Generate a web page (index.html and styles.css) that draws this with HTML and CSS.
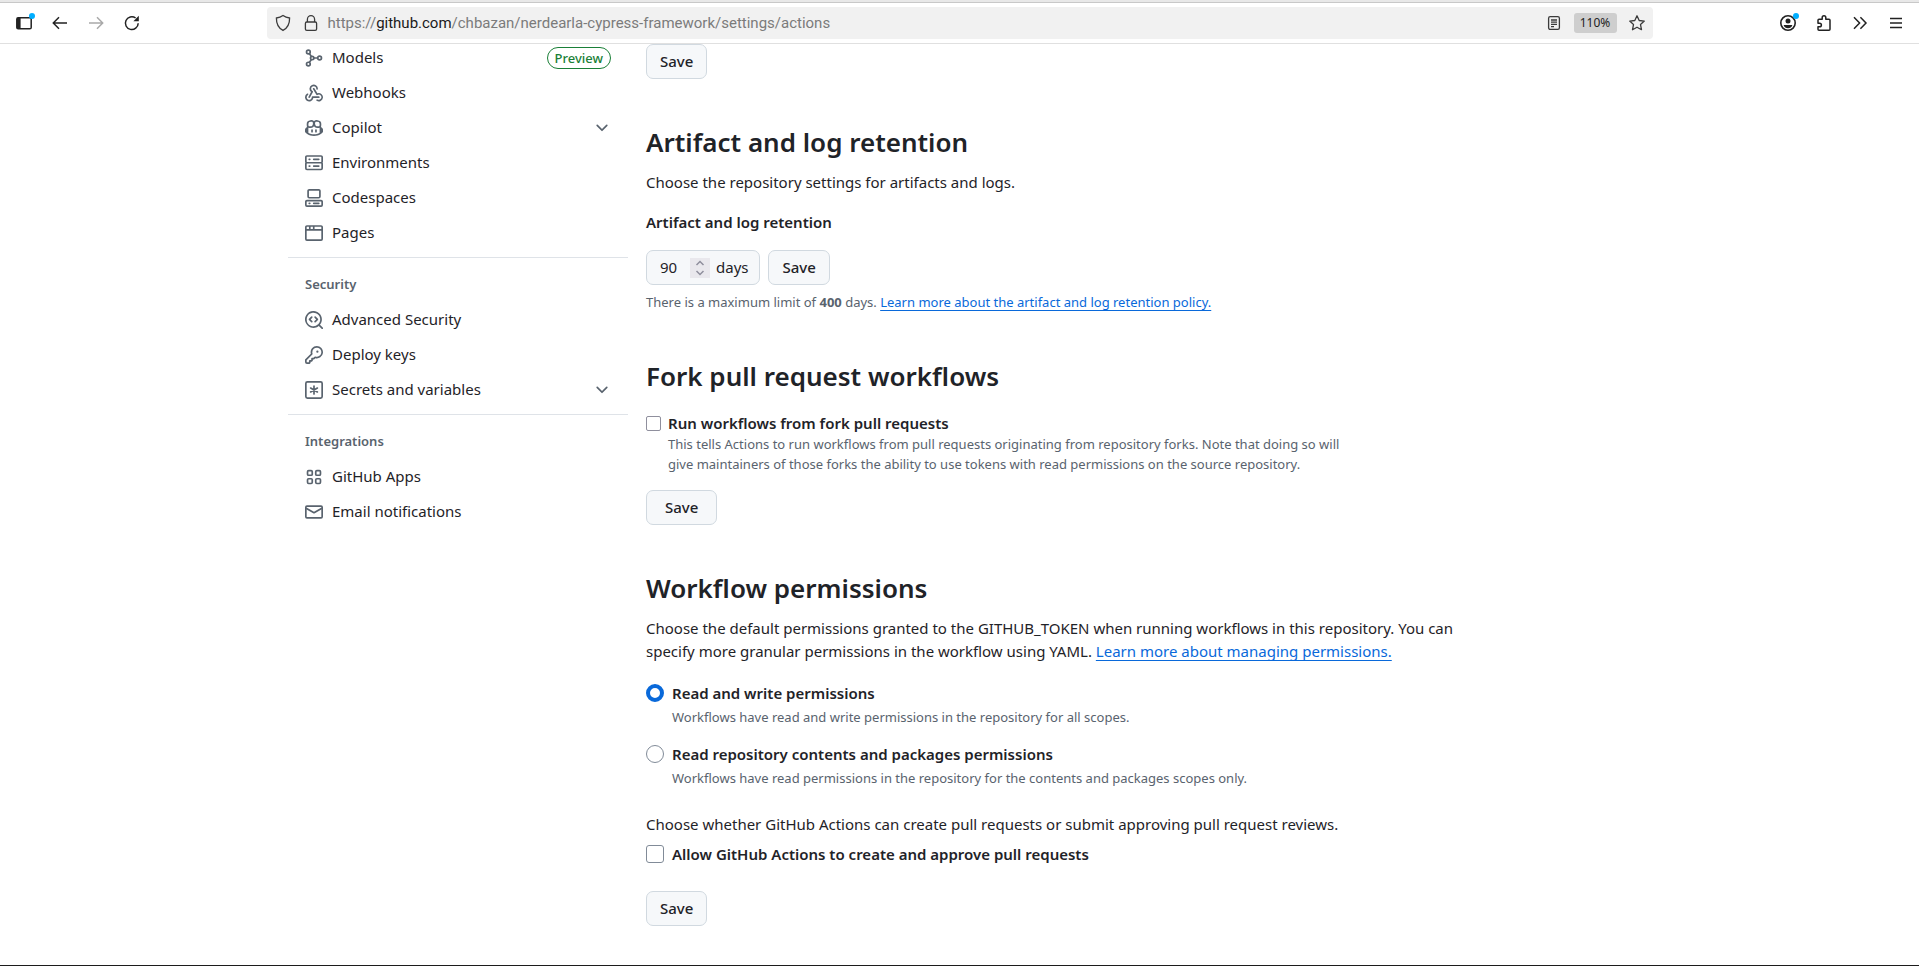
FILE: index.html
```html
<!DOCTYPE html>
<html lang="en">
<head>
<meta charset="utf-8">
<meta name="viewport" content="width=device-width, initial-scale=1">
<title>Actions settings</title>
<link rel="stylesheet" href="styles.css">
</head>
<body>
<header class="toolbar">
  <div class="tools">
    <button class="tool" type="button" aria-label="Show sidebar">
      <svg class="glyph" viewBox="0 0 18 18"><rect x="1.8" y="3.8" width="14.4" height="11" rx="1.4" fill="none" stroke="currentColor" stroke-width="1.5"/><path d="M2 3.8h3.6v11H2z" fill="currentColor"/></svg>
      <span class="dot"></span>
    </button>
    <button class="tool" type="button" aria-label="Back">
      <svg class="glyph line" viewBox="0 0 18 18"><path d="M16 9H2.5M8 3.3 2.3 9 8 14.7"/></svg>
    </button>
    <button class="tool" type="button" aria-label="Forward" disabled>
      <svg class="glyph line" viewBox="0 0 18 18"><path d="M2 9h13.5M10 3.3 15.7 9 10 14.7"/></svg>
    </button>
    <button class="tool" type="button" aria-label="Reload">
      <svg class="glyph line" viewBox="0 0 18 18"><path d="M15.2 9.3A6.4 6.4 0 1 1 12.6 4"/><path d="M15.8 1.8v5.4h-5.4z" fill="currentColor" stroke="none"/></svg>
    </button>
  </div>
  <div class="urlbar">
    <button class="slot" type="button" aria-label="Tracking protection">
      <svg class="glyph thin" viewBox="0 0 18 18"><path d="M9 1.6c2 1.5 4.200 2.200 6.600 2.400.1 5-1.200 9.600-6.600 12.400C3.600 13.600 2.300 9 2.400 4 4.800 3.800 7 3.100 9 1.600Z"/></svg>
    </button>
    <button class="slot" type="button" aria-label="Connection secure">
      <svg class="glyph thin" viewBox="0 0 18 18"><rect x="3.400" y="8" width="11.200" height="8.400" rx="1.400"/><path d="M5.400 8V5.200a3.600 3.600 0 0 1 7.200 0V8"/></svg>
    </button>
    <div class="address" role="textbox" aria-label="Address">https://<span class="host">github.com</span>/chbazan/nerdearla-cypress-framework/settings/actions</div>
    <button class="slot" type="button" aria-label="Reader view">
      <svg class="glyph thin" viewBox="0 0 18 18"><rect x="3.600" y="2.600" width="10.800" height="12.800" rx="1.600"/><path d="M6 6h6M6 8.200h6M6 10.400h6M6 12.600h3"/></svg>
    </button>
    <button class="zoom-level" type="button">110%</button>
    <button class="slot" type="button" aria-label="Bookmark">
      <svg class="glyph thin" viewBox="0 0 18 18"><path d="m9 1.800 2.200 4.700 5.100.6-3.800 3.500 1 5.100L9 13.200l-4.500 2.500 1-5.100L1.700 7.100l5.100-.6Z" stroke-linejoin="round"/></svg>
    </button>
  </div>
  <div class="tools end">
    <button class="tool" type="button" aria-label="Account">
      <svg class="glyph" viewBox="0 0 18 18"><circle cx="9" cy="9" r="7.200" fill="none" stroke="currentColor" stroke-width="1.600"/><circle cx="9" cy="7" r="2.500" fill="currentColor"/><path d="M4.600 11h8.800c-.6 2.200-2.300 3.200-4.400 3.200S5.200 13.200 4.600 11Z" fill="currentColor"/></svg>
      <span class="dot"></span>
    </button>
    <button class="tool" type="button" aria-label="Extensions">
      <svg class="glyph line" viewBox="0 0 18 18"><path d="M3 7.400V6.200c0-.6.400-1 1-1h3.200V3.600a1.800 1.800 0 0 1 3.600 0v1.600H14c.6 0 1 .4 1 1v9c0 .6-.4 1-1 1H4c-.6 0-1-.4-1-1v-2.400h1.600a1.800 1.800 0 0 0 0-3.600H3Z" stroke-linejoin="round"/></svg>
    </button>
    <button class="tool" type="button" aria-label="More tools">
      <svg class="glyph line" viewBox="0 0 18 18"><path d="M3 3.200 8.600 9 3 14.800M9.400 3.200 15 9l-5.600 5.800"/></svg>
    </button>
    <button class="tool" type="button" aria-label="Menu">
      <svg class="glyph line" viewBox="0 0 18 18"><path d="M3 4.500h12M3 9h12M3 13.500h12"/></svg>
    </button>
  </div>
</header>

<div class="viewport">
  <div class="page">
    <nav class="sidebar" aria-label="Repository settings">
      <ul class="nav-list">
        <li><a class="nav-item" href="#models">
          <svg class="icon stroked" viewBox="0 0 16 16"><circle cx="3" cy="2.600" r="1.650"/><circle cx="3" cy="13.400" r="1.650"/><circle cx="6.400" cy="8" r="1.500"/><circle cx="13" cy="8" r="1.650"/><path d="M3.800 4.100 5.700 6.700M3.800 11.900l1.900-2.600M7.900 8h3.400"/></svg>
          <span class="nav-label">Models</span><span class="pill">Preview</span></a></li>
        <li><a class="nav-item" href="#webhooks">
          <svg class="icon" viewBox="0 0 16 16"><path d="M5.500 4.250a2.250 2.250 0 0 1 4.500 0 .75.75 0 0 0 1.500 0 3.750 3.750 0 1 0-6.140 2.889l-2.272 4.258a.75.75 0 0 0 1.324.706L7 7.250a.75.75 0 0 0-.309-1.015A2.250 2.250 0 0 1 5.500 4.250Z"/><path d="M7.364 3.607a.75.75 0 0 1 1.030.257l2.608 4.349a3.750 3.750 0 1 1-.628 6.785.75.75 0 0 1 .752-1.299 2.250 2.250 0 1 0-.033-3.880.75.75 0 0 1-1.030-.256L7.107 4.636a.75.75 0 0 1 .257-1.030Z"/><path d="M2.900 8.776A.75.75 0 0 1 2.625 9.800 2.250 2.250 0 1 0 6 11.750a.75.75 0 0 1 .75-.751h5.500a.75.75 0 0 1 0 1.500H7.425a3.751 3.751 0 1 1-5.550-3.998.75.75 0 0 1 1.024.274Z"/></svg>
          <span class="nav-label">Webhooks</span></a></li>
        <li><button class="nav-item" type="button" aria-expanded="false">
          <svg class="icon" viewBox="0 0 16 16"><path d="M7.998 15.035c-4.562 0-7.873-2.914-7.998-3.749V9.338c.085-.628.677-1.686 1.588-2.065.013-.07.024-.143.036-.218.029-.183.06-.384.126-.612-.201-.508-.254-1.084-.254-1.656 0-.87.128-1.769.693-2.484.579-.733 1.494-1.124 2.724-1.261 1.206-.134 2.262.034 2.944.765.05.053.096.108.139.165.044-.057.094-.112.143-.165.682-.731 1.738-.899 2.944-.765 1.230.137 2.145.528 2.724 1.261.566.715.693 1.614.693 2.484 0 .572-.053 1.148-.254 1.656.066.228.098.429.126.612.012.076.024.148.037.218.924.385 1.522 1.471 1.591 2.095v1.872c0 .766-3.351 3.795-8.002 3.795Zm0-1.485c2.280 0 4.584-1.110 5.002-1.433V7.862l-.023-.116c-.49.21-1.075.291-1.727.291-1.146 0-2.059-.327-2.710-.991A3.222 3.222 0 0 1 8 6.303a3.240 3.240 0 0 1-.544.743c-.65.664-1.563.991-2.710.991-.652 0-1.236-.081-1.727-.291l-.023.116v4.255c.419.323 2.722 1.433 5.002 1.433ZM6.762 2.830c-.193-.206-.637-.413-1.682-.297-1.019.113-1.479.404-1.713.7-.247.312-.369.789-.369 1.554 0 .793.129 1.171.308 1.371.162.181.519.379 1.442.379.853 0 1.339-.235 1.638-.54.315-.322.527-.827.617-1.553.117-.935-.037-1.395-.241-1.614Zm4.155-.297c-1.044-.116-1.488.091-1.681.297-.204.219-.359.679-.242 1.614.091.726.303 1.231.618 1.553.299.305.784.54 1.638.54.922 0 1.280-.198 1.442-.379.179-.2.308-.578.308-1.371 0-.765-.123-1.242-.37-1.554-.233-.296-.693-.587-1.713-.7Z"/><path d="M6.250 9.037a.75.75 0 0 1 .75.75v1.501a.75.75 0 0 1-1.500 0V9.787a.75.75 0 0 1 .75-.75Zm4.250.75v1.501a.75.75 0 0 1-1.500 0V9.787a.75.75 0 0 1 1.500 0Z"/></svg>
          <span class="nav-label">Copilot</span>
          <svg class="icon" viewBox="0 0 16 16"><path d="M12.780 5.220a.749.749 0 0 1 0 1.060l-4.250 4.250a.749.749 0 0 1-1.060 0L3.220 6.280a.749.749 0 1 1 1.060-1.060L8 8.939l3.720-3.719a.749.749 0 0 1 1.060 0Z"/></svg></button></li>
        <li><a class="nav-item" href="#environments">
          <svg class="icon" viewBox="0 0 16 16"><path d="M1.750 1h12.500c.966 0 1.750.784 1.750 1.750v4c0 .372-.116.717-.314 1 .198.283.314.628.314 1v4a1.750 1.750 0 0 1-1.750 1.750H1.750A1.750 1.750 0 0 1 0 12.750v-4c0-.358.109-.707.314-1a1.739 1.739 0 0 1-.314-1v-4C0 1.784.784 1 1.750 1ZM1.500 2.750v4c0 .138.112.25.25.25h12.500a.25.25 0 0 0 .25-.25v-4a.25.25 0 0 0-.25-.25H1.750a.25.25 0 0 0-.25.25Zm.25 5.750a.25.25 0 0 0-.25.25v4c0 .138.112.25.25.25h12.500a.25.25 0 0 0 .25-.25v-4a.25.25 0 0 0-.25-.25ZM7 4.750A.75.75 0 0 1 7.750 4h4.500a.75.75 0 0 1 0 1.500h-4.500A.75.75 0 0 1 7 4.750ZM7.750 10h4.500a.75.75 0 0 1 0 1.500h-4.500a.75.75 0 0 1 0-1.500ZM3 4.750A.75.75 0 0 1 3.750 4h.5a.75.75 0 0 1 0 1.500h-.5A.75.75 0 0 1 3 4.750ZM3.750 10h.5a.75.75 0 0 1 0 1.500h-.5a.75.75 0 0 1 0-1.500Z"/></svg>
          <span class="nav-label">Environments</span></a></li>
        <li><a class="nav-item" href="#codespaces">
          <svg class="icon" viewBox="0 0 16 16"><path d="M0 11.250c0-.966.784-1.750 1.750-1.750h12.500c.966 0 1.750.784 1.750 1.750v3A1.750 1.750 0 0 1 14.250 16H1.750A1.750 1.750 0 0 1 0 14.250Zm2-9.500C2 .784 2.784 0 3.750 0h8.500C13.216 0 14 .784 14 1.750v5a1.750 1.750 0 0 1-1.750 1.750h-8.500A1.750 1.750 0 0 1 2 6.750Zm1.750-.25a.25.25 0 0 0-.25.25v5c0 .138.112.25.25.25h8.500a.25.25 0 0 0 .25-.25v-5a.25.25 0 0 0-.25-.25Zm-2 9.500a.25.25 0 0 0-.25.25v3c0 .138.112.25.25.25h12.500a.25.25 0 0 0 .25-.25v-3a.25.25 0 0 0-.25-.25Z"/><path d="M7 12.750a.75.75 0 0 1 .75-.75h4.500a.75.75 0 0 1 0 1.500h-4.500a.75.75 0 0 1-.75-.75Zm-4 0a.75.75 0 0 1 .75-.75h.5a.75.75 0 0 1 0 1.500h-.5a.75.75 0 0 1-.75-.75Z"/></svg>
          <span class="nav-label">Codespaces</span></a></li>
        <li><a class="nav-item" href="#pages">
          <svg class="icon" viewBox="0 0 16 16"><path d="M0 2.750C0 1.784.784 1 1.750 1h12.500c.966 0 1.750.784 1.750 1.750v10.500A1.750 1.750 0 0 1 14.250 15H1.750A1.750 1.750 0 0 1 0 13.250ZM14.500 6h-13v7.250c0 .138.112.25.25.25h12.500a.25.25 0 0 0 .25-.25Zm-6-3.500v2h6V2.750a.25.25 0 0 0-.25-.25ZM5 2.500v2h2v-2Zm-3.250 0a.25.25 0 0 0-.25.25V4.500h2v-2Z"/></svg>
          <span class="nav-label">Pages</span></a></li>
      </ul>
      <h3 class="nav-heading">Security</h3>
      <ul class="nav-list">
        <li><a class="nav-item" href="#security">
          <svg class="icon" viewBox="0 0 16 16"><path d="M8.470 4.970a.75.75 0 0 0 0 1.060L9.940 7.500 8.470 8.970a.75.75 0 1 0 1.060 1.060l2-2a.75.75 0 0 0 0-1.060l-2-2a.75.75 0 0 0-1.060 0ZM6.530 6.030a.75.75 0 0 0-1.060-1.060l-2 2a.75.75 0 0 0 0 1.060l2 2a.75.75 0 1 0 1.060-1.060L5.060 7.500l1.470-1.470Z"/><path d="M12.246 13.307a7.501 7.501 0 1 1 1.060-1.060l2.474 2.473a.749.749 0 0 1-.326 1.275.749.749 0 0 1-.734-.215ZM1.500 7.500a6.002 6.002 0 0 0 3.608 5.504 6.002 6.002 0 0 0 6.486-1.117.748.748 0 0 1 .292-.293A6 6 0 1 0 1.500 7.500Z"/></svg>
          <span class="nav-label">Advanced Security</span></a></li>
        <li><a class="nav-item" href="#keys">
          <svg class="icon" viewBox="0 0 16 16"><path d="M10.500 0a5.499 5.499 0 1 1-1.288 10.848l-.932.932a.749.749 0 0 1-.53.22H7v.75a.749.749 0 0 1-.22.53l-.5.5a.749.749 0 0 1-.53.22H5v.75a.749.749 0 0 1-.22.53l-.5.5a.749.749 0 0 1-.53.22h-2A1.750 1.750 0 0 1 0 14.250v-2c0-.199.079-.389.22-.53l4.932-4.932A5.500 5.500 0 0 1 10.500 0Zm-4 5.500c-.001.431.069.86.205 1.269a.75.75 0 0 1-.181.768L1.500 12.560v1.690c0 .138.112.25.25.25h1.690l.06-.06v-1.190a.75.75 0 0 1 .75-.75h1.190l.06-.06v-1.190a.75.75 0 0 1 .75-.75h1.190l1.023-1.025a.75.75 0 0 1 .768-.18A4 4 0 1 0 6.500 5.500ZM11 6a1 1 0 1 1 0-2 1 1 0 0 1 0 2Z"/></svg>
          <span class="nav-label">Deploy keys</span></a></li>
        <li><button class="nav-item" type="button" aria-expanded="false">
          <svg class="icon stroked" viewBox="0 0 16 16"><rect x=".75" y=".75" width="14.500" height="14.500" rx="1.400"/><path d="M8 4.500v7M5 6.250l6 3.500M11 6.250l-6 3.500" stroke-linecap="round"/></svg>
          <span class="nav-label">Secrets and variables</span>
          <svg class="icon" viewBox="0 0 16 16"><path d="M12.780 5.220a.749.749 0 0 1 0 1.060l-4.250 4.250a.749.749 0 0 1-1.060 0L3.220 6.280a.749.749 0 1 1 1.060-1.060L8 8.939l3.720-3.719a.749.749 0 0 1 1.060 0Z"/></svg></button></li>
      </ul>
      <h3 class="nav-heading">Integrations</h3>
      <ul class="nav-list">
        <li><a class="nav-item" href="#apps">
          <svg class="icon stroked" viewBox="0 0 16 16"><rect x="2.250" y="2.250" width="4.200" height="4.200" rx="1"/><rect x="9.550" y="2.250" width="4.200" height="4.200" rx="1"/><rect x="2.250" y="9.550" width="4.200" height="4.200" rx="1"/><rect x="9.550" y="9.550" width="4.200" height="4.200" rx="1"/></svg>
          <span class="nav-label">GitHub Apps</span></a></li>
        <li><a class="nav-item" href="#email">
          <svg class="icon stroked" viewBox="0 0 16 16"><rect x=".75" y="2.750" width="14.500" height="10.500" rx="1"/><path d="m1 4.600 6.600 3.900q.4.200.8 0L15 4.600"/></svg>
          <span class="nav-label">Email notifications</span></a></li>
      </ul>
    </nav>

    <main class="content">
      <button class="btn" type="button">Save</button>

      <section class="section">
        <h2 class="title">Artifact and log retention</h2>
        <p class="text">Choose the repository settings for artifacts and logs.</p>
        <label class="field-label" for="retention">Artifact and log retention</label>
        <div class="controls">
          <div class="number-box">
            <input class="number" id="retention" type="number" value="90" max="400">
            <span class="stepper">
              <button class="step" type="button" aria-label="Increase"><svg class="caret" viewBox="0 0 10 6"><path d="m1.500 5 3.500-3.500L8.500 5"/></svg></button>
              <button class="step" type="button" aria-label="Decrease"><svg class="caret" viewBox="0 0 10 6"><path d="m1.500 1 3.500 3.500L8.500 1"/></svg></button>
            </span>
            <span>days</span>
          </div>
          <button class="btn" type="button">Save</button>
        </div>
        <p class="note limit">There is a maximum limit of <strong>400</strong> days. <a class="link" href="#retention-policy">Learn more about the artifact and log retention policy.</a></p>
      </section>

      <section class="section">
        <h2 class="title">Fork pull request workflows</h2>
        <div class="option compact">
          <input class="check small" id="fork" type="checkbox">
          <div>
            <label class="option-label" for="fork">Run workflows from fork pull requests</label>
            <p class="note fork-note">This tells Actions to run workflows from pull requests originating from repository forks. Note that doing so will give maintainers of those forks the ability to use tokens with read permissions on the source repository.</p>
          </div>
        </div>
        <button class="btn wide" type="button">Save</button>
      </section>

      <section class="section">
        <h2 class="title">Workflow permissions</h2>
        <p class="text">Choose the default permissions granted to the GITHUB_TOKEN when running workflows in this repository. You can specify more granular permissions in the workflow using YAML. <a class="link" href="#permissions">Learn more about managing permissions.</a></p>
        <div class="options">
          <div class="option">
            <input class="radio" id="write" type="radio" name="perm" checked>
            <div>
              <label class="option-label" for="write">Read and write permissions</label>
              <p class="note">Workflows have read and write permissions in the repository for all scopes.</p>
            </div>
          </div>
          <div class="option">
            <input class="radio" id="read" type="radio" name="perm">
            <div>
              <label class="option-label" for="read">Read repository contents and packages permissions</label>
              <p class="note">Workflows have read permissions in the repository for the contents and packages scopes only.</p>
            </div>
          </div>
        </div>
        <p class="text">Choose whether GitHub Actions can create pull requests or submit approving pull request reviews.</p>
        <div class="option approve">
          <input class="check" id="approve" type="checkbox">
          <label class="option-label" for="approve">Allow GitHub Actions to create and approve pull requests</label>
        </div>
        <button class="btn" type="button">Save</button>
      </section>
    </main>
  </div>
</div>
</body>
</html>
```
FILE: styles.css
```css
* { box-sizing: border-box; }

body {
  margin: 0;
  height: 100vh;
  display: flex;
  flex-direction: column;
  overflow: hidden;
  background: #fff;
  border-bottom: 1px solid #1c1c1c;
  color: #1f2328;
  font: 15px/23px "Noto Sans", sans-serif;
}

h2, h3, p, ul { margin: 0; padding: 0; }
ul { list-style: none; }
button, input { font: inherit; color: inherit; margin: 0; }
button { padding: 0; border: 0; background: none; }

/* Browser toolbar */
.toolbar {
  flex: none;
  display: grid;
  grid-template-columns: 1fr minmax(0, 1386px) 1fr;
  align-items: center;
  height: 44px;
  border-top: 3px solid #c8c8c8;
  border-bottom: 1px solid #e0e0e0;
  border-image: linear-gradient(#e8e8e8 2px, #c8c8c8 2px, #c8c8c8 3px, #e0e0e0 3px) 3 0 1 / 3px 0 1px;
  color: #222;
}
.tools { display: flex; padding-left: 6px; }
.tools.end { justify-content: flex-end; padding: 0 5px 0 0; }
.tool {
  position: relative;
  width: 36px;
  height: 32px;
  display: grid;
  place-items: center;
}
.tool:disabled { color: #a9a9a9; }
.glyph { width: 18px; height: 18px; display: block; }
.line, .thin { fill: none; stroke: currentColor; stroke-width: 1.5; }
.thin { stroke-width: 1.3; color: #3b3b3b; }
.dot {
  position: absolute;
  top: 6px;
  right: 7px;
  width: 6px;
  height: 6px;
  border-radius: 50%;
  background: #00aeff;
}
.urlbar {
  display: flex;
  align-items: center;
  height: 32px;
  padding: 0 2px;
  border-radius: 4px;
  background: #f1f1f1;
}
.slot { width: 28px; height: 28px; display: grid; place-items: center; }
.address {
  flex: 1;
  min-width: 0;
  padding-left: 3px;
  overflow: hidden;
  white-space: nowrap;
  color: #7b7b7b;
  font: 15px/22px Roboto, sans-serif;
}
.host { color: #1a1a1a; }
.zoom-level {
  margin: 0 6px;
  width: 43px;
  height: 20px;
  border-radius: 3px;
  background: #cecece;
  font-size: 12px;
  line-height: 20px;
}

/* Page */
.viewport { flex: 1; min-height: 0; overflow: hidden; }
.page {
  display: grid;
  grid-template-columns: 340px minmax(0, 1fr);
  gap: 18px;
  max-width: 1343px;
  margin: 0 auto;
}

.sidebar { margin-top: -4px; }
.nav-item {
  display: flex;
  align-items: center;
  gap: 9px;
  width: 100%;
  height: 35px;
  padding: 0 17px;
  color: inherit;
  text-align: left;
  text-decoration: none;
}
.nav-label { flex: 1; }
.icon { flex: none; width: 18px; height: 18px; fill: #59636e; }
.icon.stroked { fill: none; stroke: #59636e; stroke-width: 1.5; }
.pill {
  padding: 0 7px;
  border: 1px solid #1a7f37;
  border-radius: 11px;
  color: #1a7f37;
  font-size: 13px;
  font-weight: 500;
  line-height: 20px;
}
.nav-heading {
  margin-top: 7px;
  padding: 8px 17px 0;
  border-top: 1px solid #dfe3e8;
  color: #59636e;
  font-size: 13px;
  font-weight: 600;
  line-height: 36px;
}

.content { max-width: 840px; }
.btn {
  display: block;
  height: 35px;
  padding: 0 13px;
  border: 1px solid #d1d9e0;
  border-radius: 7px;
  background: #f6f8fa;
  font-weight: 500;
}
.btn.wide { padding: 0 18px; }
.section { padding-top: 43px; }
.title {
  margin-bottom: 9px;
  font-size: 26px;
  font-weight: 600;
  line-height: 40px;
}
.field-label { display: block; margin: 17px 0 16px; font-weight: 600; }
.controls { display: flex; gap: 8px; }
.number-box {
  display: flex;
  align-items: center;
  height: 35px;
  padding: 0 11px 0 13px;
  border: 1px solid #d1d9e0;
  border-radius: 7px;
  background: #f6f8fa;
}
.number {
  width: 30px;
  padding: 0;
  border: 0;
  background: none;
  appearance: textfield;
}
.number::-webkit-inner-spin-button { appearance: none; }
.stepper {
  display: grid;
  width: 20px;
  height: 20px;
  margin-right: 6px;
  background: #e9e8ed;
}
.step { display: grid; place-items: center; }
.caret { width: 10px; height: 6px; fill: none; stroke: #8f8f9d; stroke-width: 1.5; }

.note { color: #59636e; font-size: 13px; line-height: 20px; }
.limit { margin: 7px 0 1px; }
.fork-note { max-width: 700px; }
.link {
  color: #0969da;
  text-decoration: underline;
  text-decoration-skip-ink: none;
  text-underline-offset: 3px;
}
.option { display: flex; align-items: flex-start; gap: 8px; }
.option.compact { gap: 7px; margin: 16px 0; }
.option-label { display: block; font-weight: 600; }
.option.compact .option-label { line-height: 22px; }
.options { display: grid; gap: 16px; margin: 19px 0 25px; }
.options .note { margin-top: 2px; }
.approve { margin: 7px 0 25px; }

.check, .radio {
  appearance: none;
  flex: none;
  width: 18px;
  height: 18px;
  margin-top: 2px;
  border: 1px solid #818b98;
  border-radius: 3px;
  background: #fff;
}
.check.small { width: 15px; height: 15px; margin-top: 4px; border-color: #8f8f9d; border-radius: 2px; }
.radio { border-radius: 50%; }
.radio:checked { border: 4px solid #0969da; }
```
